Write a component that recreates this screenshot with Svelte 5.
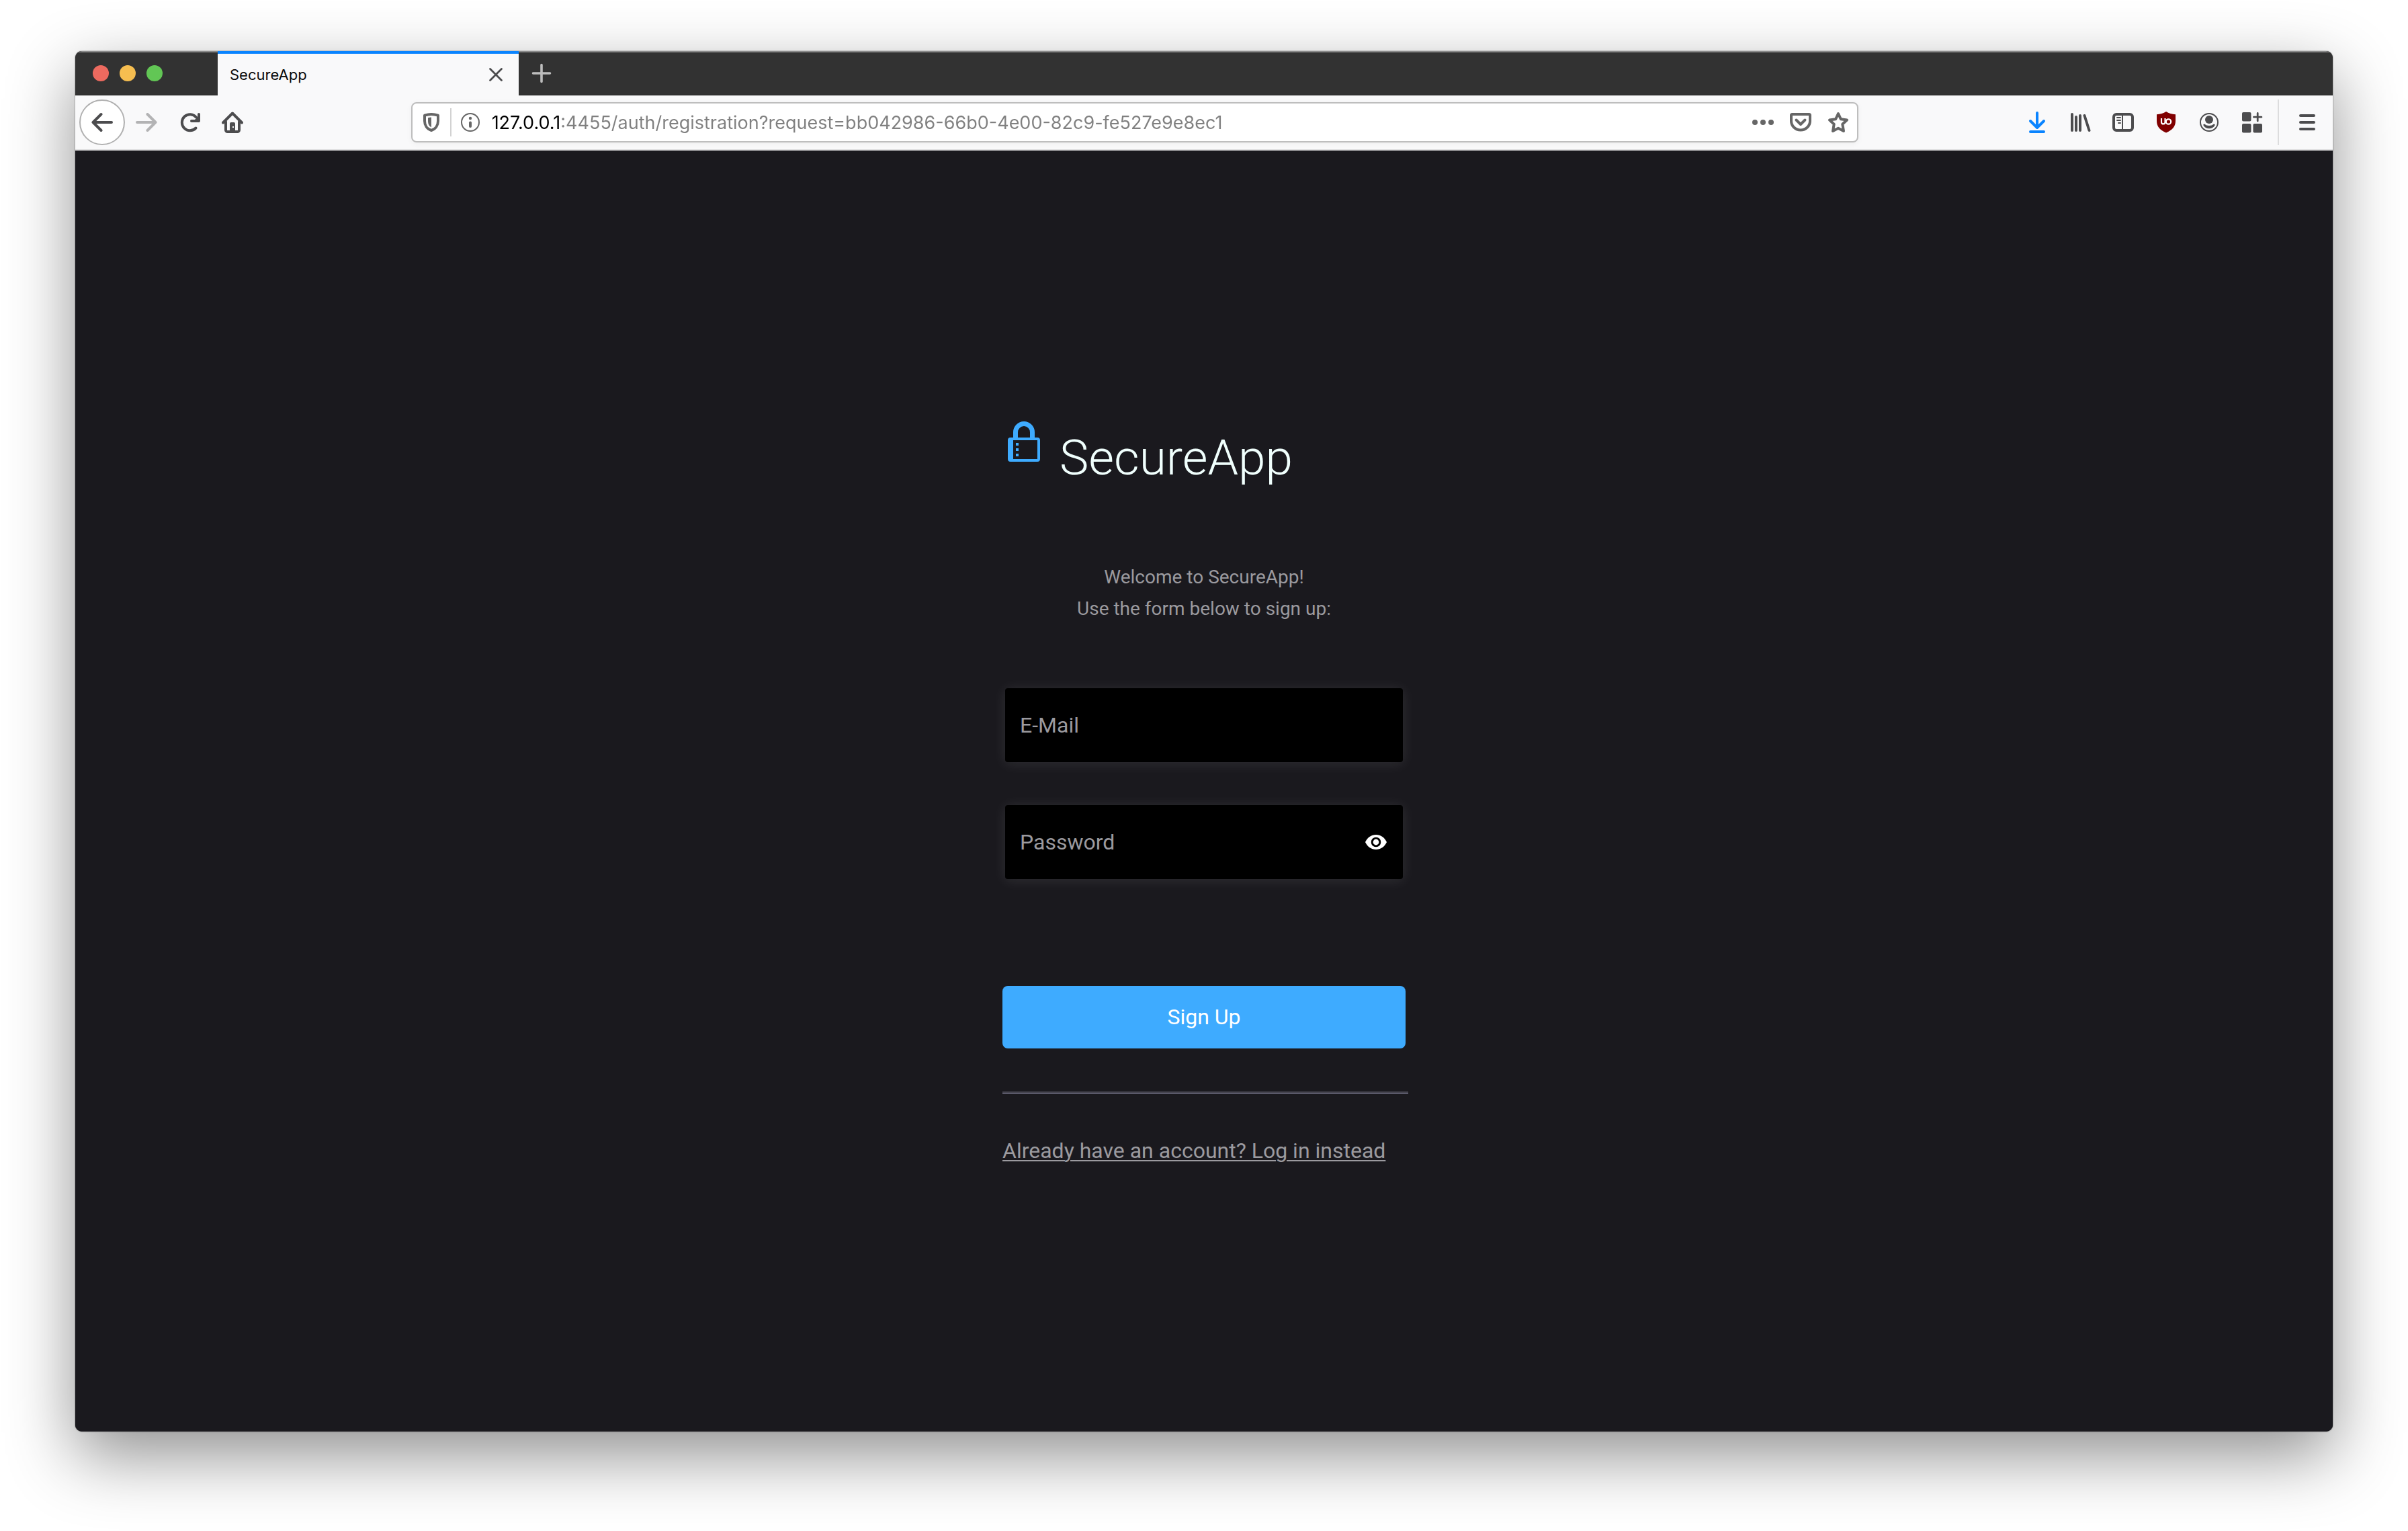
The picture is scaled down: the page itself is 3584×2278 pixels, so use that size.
<script>
  let email = $state('');
  let password = $state('');
  let revealed = $state(false);
  let url = $state('127.0.0.1:4455/auth/registration?request=bb042986-66b0-4e00-82c9-fe527e9e8ec1');
</script>

<div class="desktop">
  <div class="window">
    <header class="tabstrip">
      <div class="lights">
        <button class="light red" aria-label="Close window"></button>
        <button class="light yellow" aria-label="Minimise window"></button>
        <button class="light green" aria-label="Zoom window"></button>
      </div>
      <div class="tab">
        <span class="tab-title">SecureApp</span>
        <button class="tab-close" aria-label="Close tab">
          <svg width="32" height="32" viewBox="0 0 32 32"><path d="M7.5 7.5l17 17M24.5 7.5l-17 17" fill="none" stroke="#4c4c4e" stroke-width="2.8" stroke-linecap="round" /></svg>
        </button>
      </div>
      <button class="new-tab" aria-label="New tab">
        <svg width="32" height="32" viewBox="0 0 32 32"><path d="M16 3.5v25M3.5 16h25" fill="none" stroke="#bdbdbd" stroke-width="3.6" stroke-linecap="round" /></svg>
      </button>
    </header>

    <nav class="toolbar" aria-label="Browser toolbar">
      <button class="back" aria-label="Back">
        <svg class="line" viewBox="0 0 32 32"><path d="M30 16H2.5M14.5 4L2.5 16l12 12" /></svg>
      </button>
      <button class="tool faded" aria-label="Forward">
        <svg class="line" viewBox="0 0 32 32"><path d="M2 16h27.500M17.500 4l12 12-12 12" /></svg>
      </button>
      <button class="tool" aria-label="Reload">
        <svg class="line" viewBox="0 0 32 32">
          <path d="M25.500 24.500A12 12 0 1 1 26 8.500" /><path d="M30 4v10H19" />
          <path d="M30 6v8h-8z" fill="#4c4c4e" stroke="none" />
        </svg>
      </button>
      <button class="tool" aria-label="Home">
        <svg class="line" viewBox="0 0 32 32">
          <path d="M2 16.500L16 2.500l14 14" />
          <path d="M6 15v12.500a2.500 2.500 0 0 0 2.500 2.500h15a2.500 2.500 0 0 0 2.500-2.500V15" />
          <path fill-rule="evenodd" fill="#4c4c4e" stroke="none" d="M12 30V18a2 2 0 0 1 2-2h4a2 2 0 0 1 2 2v12zm4-8v2h2v-2z" />
        </svg>
      </button>

      <div class="spring"></div>
      <div class="urlbar">
        <button class="inbar" aria-label="Tracking protection">
          <svg viewBox="0 0 32 32">
            <path d="M16 4c4 0 7 .7 10 1.700V14c0 6.500-3.600 12-10 14C9.600 26 6 20.500 6 14V5.700C9 4.700 12 4 16 4z" fill="none" stroke="#666" stroke-width="4" stroke-linejoin="round" />
            <path d="M16 8.500v15c-3-1.500-5-4.500-5-9.500V9.300c1.600-.5 3.200-.8 5-.8z" fill="#666" />
          </svg>
        </button>
        <span class="divider"></span>
        <button class="inbar" aria-label="Site information">
          <svg viewBox="0 0 32 32">
            <circle cx="16" cy="16" r="13" fill="none" stroke="#666" stroke-width="2" />
            <circle cx="16" cy="10" r="2.200" fill="#666" />
            <path d="M16 16.500v5.500" stroke="#666" stroke-width="4" stroke-linecap="round" />
          </svg>
        </button>
        <input class="url" type="text" aria-label="Address" bind:value={url} />
        <button class="inbar" aria-label="Page actions">
          <svg viewBox="0 0 32 32" fill="#666"><circle cx="4" cy="16" r="4" /><circle cx="16" cy="16" r="4" /><circle cx="28" cy="16" r="4" /></svg>
        </button>
        <button class="inbar" aria-label="Save to Pocket">
          <svg viewBox="0 0 32 32" fill="none" stroke="#666" stroke-width="4" stroke-linecap="round" stroke-linejoin="round">
            <path d="M3.500 4h25a1.500 1.500 0 0 1 1.500 1.500V14a14 13.500 0 0 1-28 0V5.500A1.500 1.500 0 0 1 3.500 4z" /><path d="M9.500 12.500l6.500 6.500 6.500-6.500" />
          </svg>
        </button>
        <button class="inbar" aria-label="Bookmark page">
          <svg viewBox="0 0 32 32" fill="none" stroke="#666" stroke-width="4" stroke-linejoin="round">
            <path d="M16 3l3.900 8.300 9.100 1.200-6.700 6.300 1.700 10.200L16 24.700 8 29l1.700-10.200L3 12.500l9.100-1.200z" />
          </svg>
        </button>
      </div>
      <div class="spring"></div>

      <button class="tool" aria-label="Downloads">
        <svg class="line blue" viewBox="0 0 32 32"><path d="M16 2v22M6 14l10 10 10-10M6 30h20" /></svg>
      </button>
      <button class="tool" aria-label="Library">
        <svg class="line" viewBox="0 0 32 32"><path d="M4 4v24M10 8v20M16 6v22M22.500 6l7 22" /></svg>
      </button>
      <button class="tool" aria-label="Sidebars">
        <svg viewBox="0 0 32 32" fill="none" stroke="#4c4c4e">
          <rect x="2" y="4" width="28" height="24" rx="4" stroke-width="4" /><path d="M15 5v22" stroke-width="2" /><path d="M7 9h5M7 13h5M9 17h3" stroke-width="2" stroke-linecap="round" />
        </svg>
      </button>
      <button class="tool" aria-label="uBlock Origin">
        <svg viewBox="0 0 32 32">
          <path d="M16 0c4 2.800 8.500 4 14 4.200V14c0 8.500-5 13.500-14 17.500C7 27.500 2 22.500 2 14V4.200C7.500 4 12 2.800 16 0z" fill="#800000" />
          <path d="M9 10v6.200a2.800 2.800 0 0 0 5.500 0V10" fill="none" stroke="#fff" stroke-width="2.200" />
          <circle cx="19.500" cy="15" r="3.700" fill="none" stroke="#fff" stroke-width="2.200" />
        </svg>
      </button>
      <button class="tool" aria-label="Account">
        <svg viewBox="0 0 32 32">
          <circle cx="16" cy="16" r="13" fill="none" stroke="#4c4c4e" stroke-width="2" />
          <circle cx="16" cy="12" r="6" fill="#4c4c4e" />
          <path d="M9 18.500c2 1.700 4.300 2.500 7 2.500s5-.8 7-2.500c1.500 0 2 1 1.500 2-1.500 3-4.800 4.700-8.500 4.700s-7-1.700-8.500-4.700c-.5-1 0-2 1.500-2z" fill="#4c4c4e" />
        </svg>
      </button>
      <button class="tool" aria-label="Extensions">
        <svg viewBox="0 0 32 32" fill="#4c4c4e">
          <rect x="1" y="1" width="13.500" height="13.500" rx="2" /><rect x="1" y="18" width="13.500" height="13.500" rx="2" /><rect x="17.500" y="18" width="13.500" height="13.500" rx="2" />
          <path d="M24.200 2.500v11.400M18.500 8.200h11.400" stroke="#4c4c4e" stroke-width="2.800" stroke-linecap="round" />
        </svg>
      </button>
      <span class="menu-divider"></span>
      <button class="tool" aria-label="Menu">
        <svg class="line" viewBox="0 0 32 32"><path d="M6 6h20M6 16h20M6 26h20" /></svg>
      </button>
    </nav>

    <main class="page">
      <div class="panel">
        <div class="brand">
          <svg class="lock" viewBox="0 0 48 60" aria-hidden="true">
            <path fill="#3eabff" fill-rule="evenodd" d="M8 24V16a16 16 0 0 1 32 0v8h4a4 4 0 0 1 4 4v28a4 4 0 0 1-4 4H4a4 4 0 0 1-4-4V28a4 4 0 0 1 4-4zm7 0h18v-8a9 9 0 0 0-18 0zM8 28v28h36V28z" />
            <path fill="#3eabff" d="M12 32h4v4h-4zM12 40h4v4h-4zM12 48h4v4h-4z" />
          </svg>
          <h1>SecureApp</h1>
        </div>
        <p class="intro">Welcome to SecureApp!<br />Use the form below to sign up:</p>
        <form onsubmit={(e) => e.preventDefault()}>
          <div class="field">
            <input type="email" aria-label="E-Mail" placeholder="E-Mail" bind:value={email} />
          </div>
          <div class="field">
            <input type={revealed ? 'text' : 'password'} aria-label="Password" placeholder="Password" bind:value={password} />
            <button class="eye" type="button" aria-label="Show password" onclick={() => (revealed = !revealed)}>
              <svg width="32" height="22" viewBox="0 0 32 22">
                <path fill="#fff" fill-rule="evenodd" d="M16 0c7 0 13 4.400 16 11-3 6.600-9 11-16 11S3 17.600 0 11C3 4.400 9 0 16 0zm0 3.700a7.300 7.300 0 1 0 0 14.600 7.300 7.300 0 0 0 0-14.600z" />
                <circle cx="16" cy="11" r="4.400" fill="#fff" />
              </svg>
            </button>
          </div>
          <button class="submit" type="submit">Sign Up</button>
        </form>
        <hr />
        <a class="login" href="#login">Already have an account? Log in instead</a>
      </div>
    </main>
  </div>
</div>

<style>
  :global(body) { margin: 0; background: #fff; }
  * { box-sizing: border-box; }
  button { border: 0; padding: 0; margin: 0; background: none; font: inherit; display: flex; align-items: center; justify-content: center; flex: none; cursor: pointer; }
  svg { display: block; flex: none; }

  .desktop { display: flex; min-height: 100vh; padding: 76px 112px 148px; background: #fff; }
  .window {
    flex: 1; min-width: 0; display: flex; flex-direction: column; overflow: hidden;
    border-radius: 10px; background: #1a191e;
    box-shadow: 0 0 2px rgba(0, 0, 0, 0.6), 0 36px 100px rgba(0, 0, 0, 0.44);
    font-family: Inter, 'Liberation Sans', sans-serif;
  }

  .tabstrip { display: flex; height: 66px; background: #323232; box-shadow: inset 0 2px #8a8a8a, inset 0 -1px #232323; }
  .lights { display: flex; align-items: center; gap: 16px; width: 212px; padding-left: 26px; }
  .light { width: 24px; height: 24px; border-radius: 50%; }
  .red { background: #ed6a5f; }
  .yellow { background: #f6be50; }
  .green { background: #62c655; }
  .tab { display: flex; align-items: center; justify-content: space-between; width: 448px; padding: 0 14px 0 18px; border-top: 4px solid #0a84ff; background: #f9f9fa; }
  .tab-title { font-size: 22px; line-height: 28px; color: #0c0c0d; }
  .tab-close { width: 40px; height: 40px; }
  .new-tab { width: 68px; }

  .toolbar { display: flex; align-items: center; height: 82px; padding: 0 6px; border-bottom: 2px solid #e0e0e1; background: #f9f9fa; }
  .toolbar svg { width: 32px; height: 32px; }
  .line { fill: none; stroke: #4c4c4e; stroke-width: 4; stroke-linecap: round; stroke-linejoin: round; }
  .blue { stroke: #0a84ff; }
  .faded { opacity: 0.4; }
  .back { width: 68px; height: 68px; border: 2px solid #b1b1b1; border-radius: 50%; background: #fff; }
  .tool { width: 64px; height: 64px; }
  .spring { flex: 234 1 0; }
  .menu-divider { width: 2px; height: 68px; margin: 0 10px 0 6px; background: #dcdcdd; }

  .urlbar { display: flex; align-items: center; flex: 2154 1 0; min-width: 0; height: 60px; border: 2px solid #bebebe; border-radius: 8px; background: #fff; box-shadow: 0 2px 8px rgba(0, 0, 0, 0.05); }
  .inbar { width: 56px; height: 56px; }
  .divider { width: 2px; height: 42px; background: #d2d2d2; }
  .url {
    flex: 1; min-width: 0; height: 56px; padding: 0 0 0 4px; border: 0; outline: 0;
    font: 27px Inter, 'Liberation Sans', sans-serif; color: transparent; caret-color: #000;
    background: linear-gradient(to right, #000 107px, #808080 107px); -webkit-background-clip: text; background-clip: text;
  }

  .page { flex: 1; display: flex; align-items: center; justify-content: center; padding-top: 4px; background: #1a191e; font-family: Roboto, 'Liberation Sans', sans-serif; }
  .panel { width: 600px; }
  .brand { display: flex; align-items: flex-start; gap: 29px; padding-left: 8px; }
  .lock { width: 48px; height: 60px; }
  h1 { margin: 0; padding-top: 18px; font-size: 73px; font-weight: 300; line-height: 72px; color: #f0fffd; }
  .intro { margin: 118px 0 95px; font-size: 28px; line-height: 47px; text-align: center; color: #9b9a9f; }
  form { display: flex; flex-direction: column; }
  .field { display: flex; align-items: center; height: 110px; margin: 0 4px 64px; padding-right: 16px; border-radius: 4px; background: #000; box-shadow: 0 2px 20px rgba(255, 255, 255, 0.1); }
  .field input { flex: 1; min-width: 0; height: 110px; padding: 0 0 0 22px; border: 0; outline: 0; background: none; font: 32px Roboto, 'Liberation Sans', sans-serif; color: #fff; }
  .field input::placeholder { color: #9b9a9f; opacity: 1; }
  .eye { width: 48px; height: 48px; }
  .submit { height: 93px; margin-top: 95px; border-radius: 8px; background: #3eabff; font-size: 32px; color: #fff; }
  hr { margin: 64px -4px 64px 0; height: 4px; border: 0; border-top: 2px solid #45444f; background: #5a596a; }
  .login { display: inline-block; font-size: 32px; line-height: 40px; color: #9b9a9f; text-decoration: underline; text-decoration-thickness: 2px; text-underline-offset: 3px; }
</style>
